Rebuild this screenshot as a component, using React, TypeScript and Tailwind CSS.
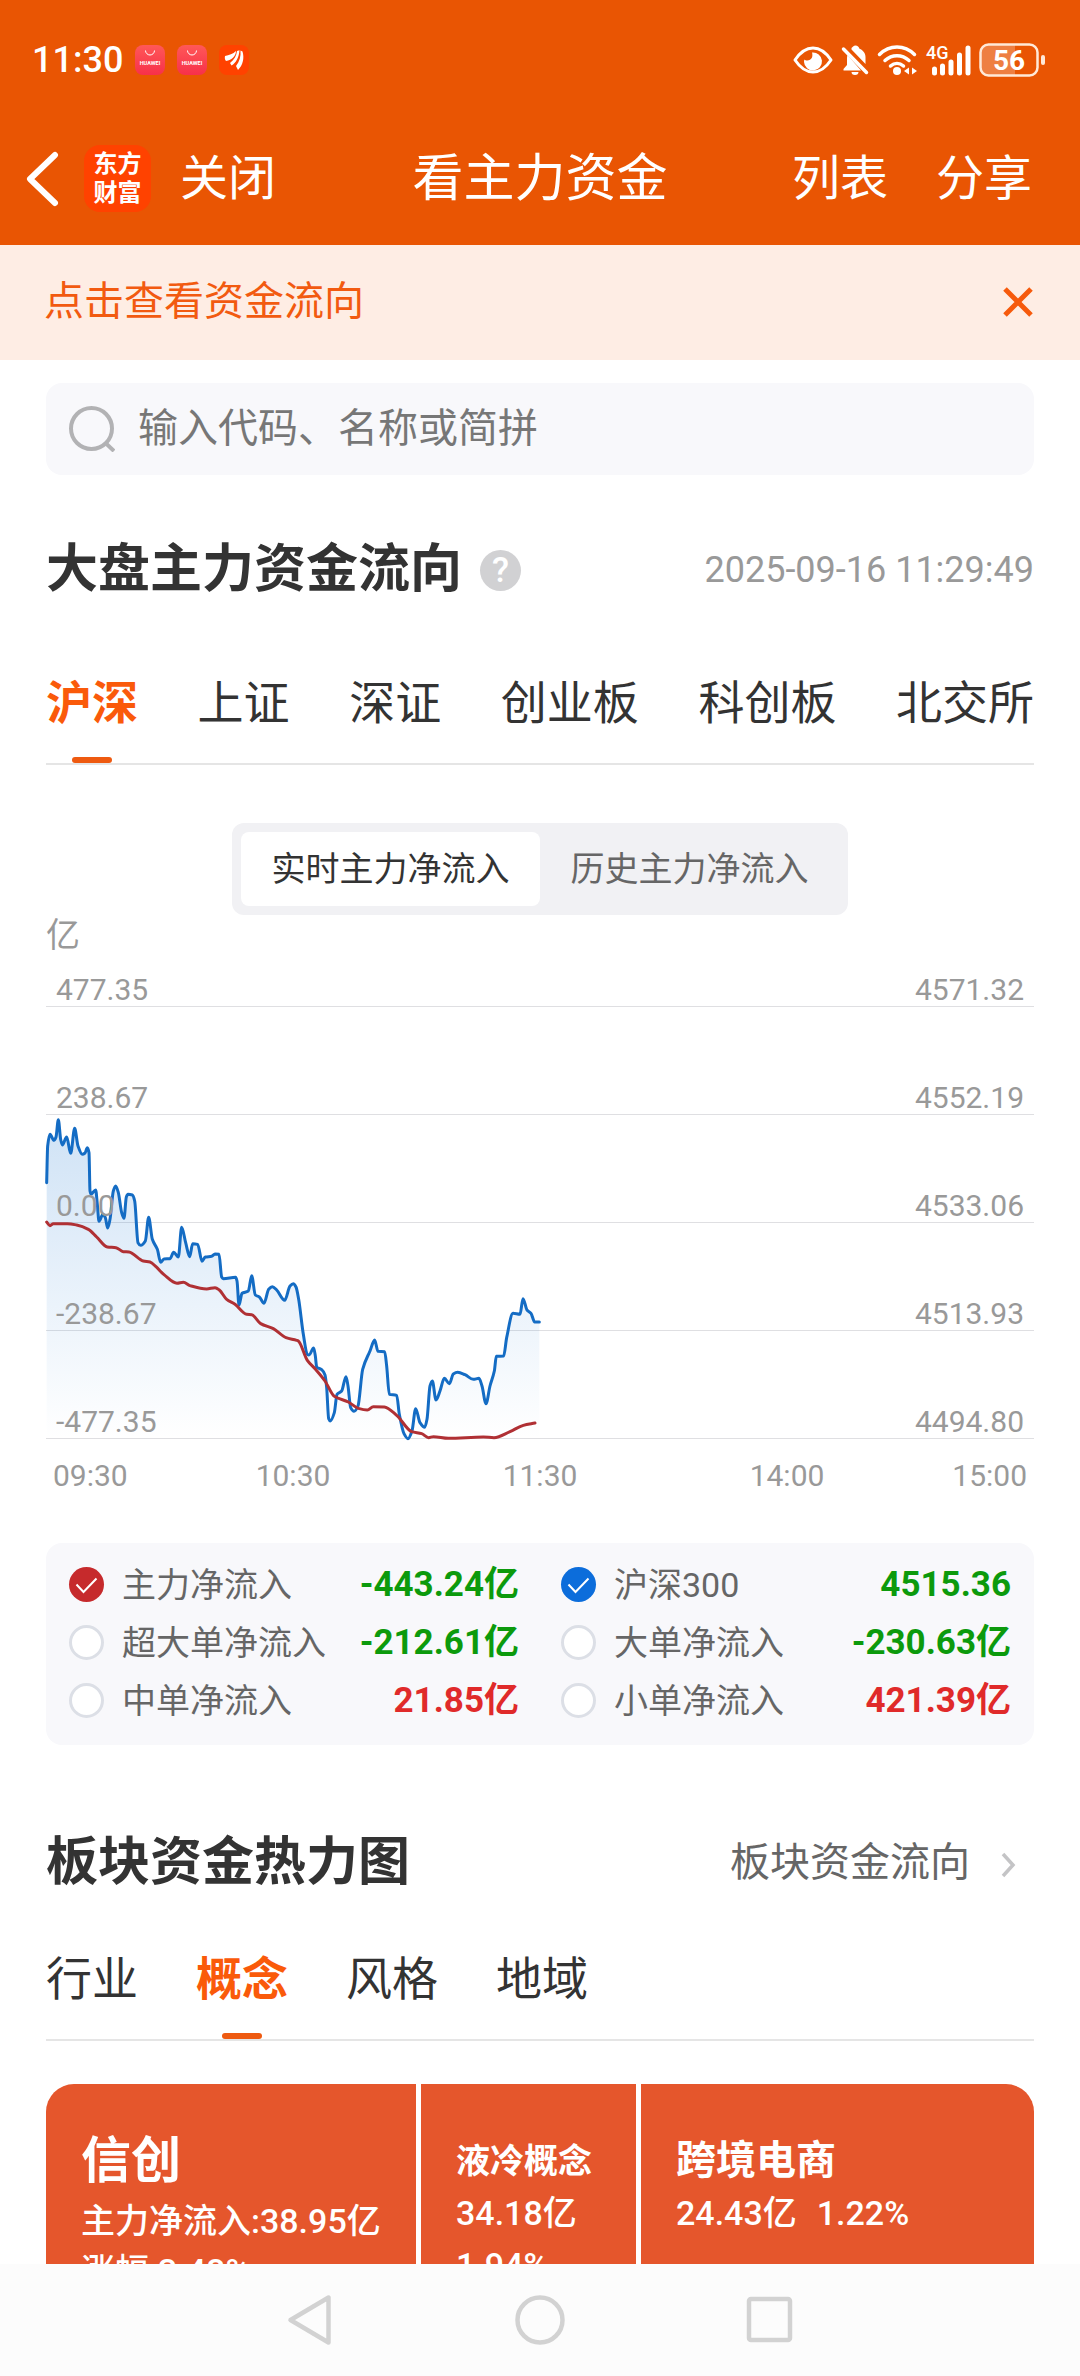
import { useState } from 'react';

type Point = [number, number];

/* Plot space: 2964 wide (full session) by 1296 high (four grid bands). */
const indexLine: Point[] = [
  [2, 527], [5, 417], [12, 382], [24, 400], [30, 390], [37, 338], [44, 397], [49, 414], [62, 390], [74, 439],
  [86, 364], [96, 417], [109, 442], [117, 438], [124, 422], [129, 437], [132, 552], [135, 561], [149, 549],
  [154, 592], [159, 643], [171, 622], [178, 632], [185, 663], [192, 637], [202, 552], [209, 537], [217, 557],
  [227, 617], [234, 634], [241, 570], [246, 562], [259, 564], [266, 582], [276, 707], [284, 715], [298, 702],
  [308, 631], [319, 697], [334, 727], [344, 766], [354, 756], [372, 755], [383, 736], [397, 750], [407, 661],
  [419, 707], [431, 749], [440, 710], [455, 712], [468, 763], [478, 750], [497, 748], [507, 741], [519, 742],
  [527, 810], [532, 815], [569, 811], [573, 822], [579, 894], [588, 859], [607, 852], [617, 806], [628, 864],
  [640, 870], [654, 889], [668, 847], [679, 839], [692, 849], [716, 880], [732, 837], [742, 830], [750, 840],
  [758, 877], [772, 982], [784, 1042], [789, 1044], [803, 1023], [808, 1047], [812, 1080], [827, 1088],
  [837, 1104], [842, 1142], [848, 1235], [853, 1242], [865, 1217], [873, 1162], [887, 1152], [900, 1109],
  [906, 1137], [914, 1202], [924, 1213], [936, 1197], [950, 1087], [972, 1032], [986, 999], [996, 1033],
  [1016, 1034], [1022, 1077], [1030, 1162], [1052, 1165], [1060, 1222], [1074, 1280], [1086, 1295],
  [1098, 1272], [1109, 1205], [1122, 1247], [1136, 1261], [1143, 1237], [1152, 1137], [1159, 1122],
  [1170, 1179], [1182, 1152], [1195, 1114], [1210, 1130], [1222, 1101], [1235, 1096], [1257, 1103],
  [1282, 1117], [1299, 1114], [1308, 1137], [1320, 1190], [1332, 1137], [1345, 1092], [1351, 1048],
  [1373, 1047], [1382, 992], [1401, 919], [1422, 922], [1431, 875], [1443, 909], [1455, 919], [1466, 945],
  [1480, 945],
];

const flowLine: Point[] = [
  [2, 645], [12, 656], [22, 650], [64, 650], [92, 654], [127, 667], [152, 690], [184, 720], [210, 722],
  [232, 734], [249, 735], [292, 762], [312, 765], [330, 779], [354, 803], [393, 829], [412, 826], [432, 836],
  [482, 846], [507, 842], [520, 849], [542, 877], [567, 892], [602, 922], [617, 923], [644, 950], [682, 965],
  [720, 992], [752, 1000], [757, 1002], [784, 1060], [807, 1085], [837, 1122], [865, 1168], [907, 1185],
  [937, 1204], [964, 1209], [982, 1199], [1015, 1200], [1052, 1225], [1097, 1274], [1127, 1280],
  [1148, 1292], [1162, 1289], [1207, 1294], [1312, 1290], [1344, 1292], [1392, 1274], [1432, 1255],
  [1467, 1248],
];

/* Monotone cubic interpolation, so peaks never overshoot their samples. */
function smooth(points: Point[]): string {
  const slopes = points.slice(1).map((p, i) => (p[1] - points[i][1]) / (p[0] - points[i][0]));
  const tangents = points.map((_, i) => {
    if (i === 0) return slopes[0];
    if (i === points.length - 1) return slopes[i - 1];
    const a = slopes[i - 1];
    const b = slopes[i];
    return a * b <= 0 ? 0 : (2 * a * b) / (a + b);
  });
  let d = `M${points[0][0]} ${points[0][1]}`;
  for (let i = 1; i < points.length; i++) {
    const [x0, y0] = points[i - 1];
    const [x1, y1] = points[i];
    const h = (x1 - x0) / 3;
    d += `C${x0 + h} ${y0 + h * tangents[i - 1]} ${x1 - h} ${y1 - h * tangents[i]} ${x1} ${y1}`;
  }
  return d;
}

const indexPath = smooth(indexLine);
const flowPath = smooth(flowLine);

const axisRows = [
  ['477.35', '4571.32'],
  ['238.67', '4552.19'],
  ['0.00', '4533.06'],
  ['-238.67', '4513.93'],
  ['-477.35', '4494.80'],
];

function AppBadge() {
  return (
    <svg viewBox="0 0 30 30" className="size-[30px]" aria-hidden="true">
      <defs>
        <linearGradient id="store" x1="0" y1="0" x2="0" y2="1">
          <stop offset="0" stopColor="#ff5858" />
          <stop offset="1" stopColor="#f7304a" />
        </linearGradient>
      </defs>
      <rect width="30" height="30" rx="8" fill="url(#store)" />
      <path d="M10.500 5.500a4.500 4.500 0 0 0 9 0" fill="none" stroke="#fff" strokeWidth="1" />
      <text x="15" y="19.500" textAnchor="middle" fontSize="5.500" fontWeight="700" fill="#fff" fontFamily="Roboto, sans-serif">HUAWEI</text>
    </svg>
  );
}

function StatusBar() {
  return (
    <div className="flex h-[120px] items-center justify-between pr-[34px] pl-8">
      <div className="flex items-center gap-3">
        <span className="text-[36px] leading-[48px] font-medium">11:30</span>
        <AppBadge />
        <AppBadge />
        <svg viewBox="0 0 30 30" className="size-[30px]" aria-hidden="true">
          <rect width="30" height="30" rx="8" fill="#ff4200" />
          <path d="M6 11c4-1 8-2 11-5 0 5-4 9-10 10-1-1-1.500-3-1-5z" fill="#fff" />
          <path d="M18 6l2.500-.8C20 12 17 18 12.500 20.500L11 18c4-3 6.500-7 7-12z" fill="#fff" />
          <path d="M21.500 5.500l2 1C25.500 13 24 20 19 25l-2-4c3.500-4.500 5-9.500 4.500-15.500z" fill="#fff" />
        </svg>
      </div>
      <div className="flex items-center gap-2">
        <svg viewBox="0 0 40 30" className="h-[30px] w-10" aria-hidden="true">
          <path d="M2 15C8 6 14 3 20 3s12 3 18 12c-6 9-12 12-18 12S8 24 2 15z" fill="none" stroke="#fff" strokeWidth="3" strokeLinejoin="round" />
          <path d="M19 7.500a9 9 0 1 1-8 9.500c0-1 .1-1.800.4-2.500C13 16 17.500 16 19 12.500c.5-1.500.5-3.500 0-5z" fill="#fff" />
        </svg>
        <svg viewBox="0 0 28 32" className="h-8 w-7" aria-hidden="true">
          <path d="M6.500 11c-.3 1-.5 2-.5 3v7l-3.500 4v1.500H20L6.500 11zM10.500 5.500 24.500 20v-7c0-4-2.500-7-6-8.300C18 3 16.500 1.500 14.500 1.500S11.500 3 10.500 4z" fill="#fff" />
          <path d="M10.500 28h7a3.500 3 0 0 1-7 0z" fill="#fff" />
          <path d="M2.500 5 25.500 28.500" stroke="#fff" strokeWidth="3.500" strokeLinecap="round" />
        </svg>
        <svg viewBox="0 0 40 32" className="h-8 w-10" fill="none" stroke="#fff" strokeWidth="3.500" strokeLinecap="round" aria-hidden="true">
          <path d="M2.500 10.500c10-10 25-10 35 0" />
          <path d="M8 16.500c7-6.500 17-6.500 24 0" />
          <path d="M13.500 22c4-3.500 9-3.500 13 0" />
          <circle cx="20" cy="27" r="4" fill="#fff" stroke="none" />
          <path d="M32 23.500v7l-5-3.500zM35 23.500v7l5-3.500z" fill="#fff" stroke="none" />
        </svg>
        <svg viewBox="0 0 46 32" className="h-8 w-[46px] overflow-visible" aria-hidden="true">
          <text x="1" y="15" fontSize="18" fontWeight="500" fill="#fff" fontFamily="Roboto, sans-serif">4G</text>
          <path d="M9.500 25v4M17.500 22v7M26 18v11M34.500 11v18M43 4v25" stroke="#fff" strokeWidth="5" strokeLinecap="round" />
        </svg>
        <svg viewBox="0 0 67 34" className="h-[34px] w-[67px]" aria-hidden="true">
          <path d="M9 2h27v30H9a7 7 0 0 1-7-7V9a7 7 0 0 1 7-7z" fill="#fff" fillOpacity=".25" />
          <rect x="1.500" y="1.500" width="57" height="31" rx="8" fill="none" stroke="#ffe9d8" strokeWidth="2.500" />
          <rect x="62" y="12" width="4" height="10" rx="2" fill="#ffe9d8" />
          <text x="30" y="27" textAnchor="middle" fontSize="28" fontWeight="700" fill="#fff" fontFamily="Roboto, sans-serif">56</text>
        </svg>
      </div>
    </div>
  );
}

function NavBar() {
  return (
    <nav className="grid h-[125px] grid-cols-[1fr_auto_1fr] items-center pb-2 text-[48px] leading-[64px]">
      <div className="flex items-center pl-[26px]">
        <button type="button" aria-label="返回">
          <svg viewBox="0 0 34 56" className="h-14 w-[34px]" aria-hidden="true">
            <path d="M29 4 4 28l25 24" fill="none" stroke="#fff" strokeWidth="6" strokeLinecap="round" strokeLinejoin="round" />
          </svg>
        </button>
        <div className="ml-6 flex size-[67px] flex-col items-center justify-center rounded-2xl bg-[#ff4200] text-[24px] leading-[29px] font-bold">
          <span>东方</span>
          <span>财富</span>
        </div>
        <button type="button" className="ml-[29px]">关闭</button>
      </div>
      <h1 className="text-[51px]">看主力资金</h1>
      <div className="flex items-center justify-end gap-12 pr-12">
        <button type="button">列表</button>
        <button type="button">分享</button>
      </div>
    </nav>
  );
}

function Tabs({ items, initial, spread }: { items: string[]; initial: string; spread?: boolean }) {
  const [active, setActive] = useState(initial);
  return (
    <div role="tablist" className={`flex border-b-2 border-[#e5e5e5] ${spread ? 'justify-between' : 'gap-[58px]'}`}>
      {items.map((item) => {
        const on = item === active;
        return (
          <button
            key={item}
            type="button"
            role="tab"
            aria-selected={on}
            onClick={() => setActive(item)}
            className={`flex flex-col items-center gap-[21px] text-[46px] leading-[66px] ${on ? 'font-bold text-[#fa5a0a]' : 'text-[#333]'}`}
          >
            {item}
            <span className={`h-[6px] w-10 rounded-sm ${on ? 'bg-[#ee5a10]' : 'bg-transparent'}`} />
          </button>
        );
      })}
    </div>
  );
}

function FlowChart() {
  return (
    <figure>
      <div className="pt-[2px] text-[34px] leading-9 text-[#999]">亿</div>
      <div className="relative">
        <svg viewBox="0 0 2964 1296" preserveAspectRatio="none" className="absolute inset-x-0 bottom-0 h-[432px] w-full overflow-visible" aria-hidden="true">
          <defs>
            <linearGradient id="area" gradientUnits="userSpaceOnUse" x1="0" y1="338" x2="0" y2="1296">
              <stop offset="0" stopColor="#1070d0" stopOpacity=".2" />
              <stop offset="1" stopColor="#1070d0" stopOpacity="0" />
            </linearGradient>
          </defs>
          <path d={`${indexPath}L1480 1296L2 1296Z`} fill="url(#area)" />
        </svg>
        {axisRows.map(([left, right], i) => (
          <div
            key={left}
            className={`flex items-end justify-between border-b border-[#dfdfe2] px-[10px] text-[30px] leading-8 text-[#999] ${i === 0 ? 'h-[54px]' : 'h-[108px]'}`}
          >
            <span className="relative z-10">{left}</span>
            <span>{right}</span>
          </div>
        ))}
        <svg viewBox="0 0 2964 1296" preserveAspectRatio="none" className="absolute inset-x-0 bottom-0 h-[432px] w-full overflow-visible" fill="none" strokeWidth="3" strokeLinejoin="round" strokeLinecap="round" aria-hidden="true">
          <path d={indexPath} stroke="#146cc4" vectorEffect="non-scaling-stroke" />
          <path d={flowPath} stroke="#b03034" vectorEffect="non-scaling-stroke" />
        </svg>
      </div>
      <div className="mt-[21px] flex text-center text-[30px] leading-8 text-[#999]">
        <span className="w-1/8 pl-[7px] text-left">09:30</span>
        <span className="w-1/4">10:30</span>
        <span className="w-1/4">11:30</span>
        <span className="w-1/4">14:00</span>
        <span className="w-1/8 pr-[7px] text-right">15:00</span>
      </div>
    </figure>
  );
}

const series = [
  { name: '主力净流入', value: '-443.24亿', tone: 'text-[#0c9a0c]', on: true, fill: 'checked:bg-[#c62a2c]' },
  { name: '沪深300', value: '4515.36', tone: 'text-[#0c9a0c]', on: true, fill: 'checked:bg-[#0c6ddb]' },
  { name: '超大单净流入', value: '-212.61亿', tone: 'text-[#0c9a0c]', on: false, fill: 'checked:bg-[#c62a2c]' },
  { name: '大单净流入', value: '-230.63亿', tone: 'text-[#0c9a0c]', on: false, fill: 'checked:bg-[#c62a2c]' },
  { name: '中单净流入', value: '21.85亿', tone: 'text-[#e02a2a]', on: false, fill: 'checked:bg-[#c62a2c]' },
  { name: '小单净流入', value: '421.39亿', tone: 'text-[#e02a2a]', on: false, fill: 'checked:bg-[#c62a2c]' },
];

function Legend() {
  return (
    <div className="mt-[51px] grid grid-cols-2 gap-x-[42px] rounded-2xl bg-[#f8f8fb] px-[23px] pt-3 pb-4">
      {series.map((s) => (
        <label key={s.name} className="flex h-[58px] items-center text-[34px] leading-[48px] whitespace-nowrap text-[#666]">
          <span className="relative mr-[18px] size-[35px] shrink-0">
            <input
              type="checkbox"
              defaultChecked={s.on}
              className={`peer block size-full appearance-none rounded-full border-3 border-[#dcdfe6] bg-white checked:border-0 ${s.fill}`}
            />
            <svg viewBox="0 0 35 35" className="pointer-events-none absolute inset-0 hidden peer-checked:block" aria-hidden="true">
              <path d="M7.500 17.500 14.500 25 27.500 11.500" fill="none" stroke="#fff" strokeWidth="2" />
            </svg>
          </span>
          <span className="pt-[2px]">{s.name}</span>
          <span className={`ml-auto pt-[2px] text-[35px] font-bold ${s.tone}`}>{s.value}</span>
        </label>
      ))}
    </div>
  );
}

function HeatMap() {
  return (
    <div className="mt-[43px] grid h-[560px] grid-cols-[370fr_215fr_393fr] gap-[5px] overflow-hidden rounded-[28px] text-[34px] leading-[52px] font-medium whitespace-nowrap text-white">
      <div className="bg-[#e5562c] pt-[42px] pl-[35px] leading-[50px]">
        <h3 className="text-[50px] leading-[70px] font-bold">信创</h3>
        <p>主力净流入:38.95亿</p>
        <p>涨幅:3.48%</p>
      </div>
      <div className="bg-[#e5562c] pt-[51px] pl-[35px]">
        <h3 className="font-bold">液冷概念</h3>
        <p>34.18亿</p>
        <p>1.94%</p>
      </div>
      <div className="bg-[#e5562c] pt-[51px] pl-[35px]">
        <h3 className="text-[40px] font-bold">跨境电商</h3>
        <p className="flex gap-5">
          <span>24.43亿</span>
          <span>1.22%</span>
        </p>
      </div>
    </div>
  );
}

function SystemBar() {
  return (
    <div className="flex h-28 shrink-0 items-center justify-center gap-[180px] bg-[#fcfcfc]">
      <button type="button" aria-label="后退">
        <svg viewBox="0 0 50 52" className="h-[52px] w-[50px]" fill="none" stroke="#d2d2d2" strokeWidth="4.500" strokeLinejoin="round" aria-hidden="true">
          <path d="M43.500 3.500v45L5.500 26z" />
        </svg>
      </button>
      <button type="button" aria-label="主页">
        <svg viewBox="0 0 50 50" className="size-[50px]" fill="none" stroke="#d2d2d2" strokeWidth="4.500" aria-hidden="true">
          <circle cx="25" cy="25" r="22.500" />
        </svg>
      </button>
      <button type="button" aria-label="最近任务">
        <svg viewBox="0 0 50 50" className="size-[50px]" fill="none" stroke="#d2d2d2" strokeWidth="4.500" aria-hidden="true">
          <rect x="4" y="4" width="41" height="41" rx="2" />
        </svg>
      </button>
    </div>
  );
}

export default function App() {
  const [mode, setMode] = useState('实时主力净流入');
  return (
    <div className="flex h-screen flex-col bg-white font-['Roboto','Noto_Sans_CJK_SC',sans-serif]">
      <header className="shrink-0 bg-[#e95503] text-white">
        <StatusBar />
        <NavBar />
      </header>
      <main className="min-h-0 flex-1 overflow-hidden">
        <div className="flex h-[115px] items-center justify-between bg-[#feede4] pr-[46px] pb-[2px] pl-11 text-[#f25a10]">
          <a href="#flow" className="text-[40px] leading-[56px]">点击查看资金流向</a>
          <button type="button" aria-label="关闭提示">
            <svg viewBox="0 0 32 32" className="size-8" aria-hidden="true">
              <path d="M3 3l26 26M29 3 3 29" stroke="#f65a0c" strokeWidth="5" />
            </svg>
          </button>
        </div>
        <div className="px-[46px]">
          <label className="mt-[23px] flex h-[92px] items-center rounded-2xl bg-[#f8f8fb] pl-[23px]">
            <svg viewBox="0 0 46 46" className="mr-[23px] size-[46px] shrink-0" fill="none" stroke="#b2b2b4" strokeWidth="4" aria-hidden="true">
              <circle cx="22.500" cy="22.500" r="20.500" />
              <path d="M36.500 37l8.500 8" />
            </svg>
            <input
              type="text"
              aria-label="搜索"
              placeholder="输入代码、名称或简拼"
              className="min-w-0 flex-1 bg-transparent text-[40px] leading-[56px] outline-none placeholder:text-[#777]"
            />
          </label>

          <section id="flow">
            <div className="mt-[49px] mb-[54px] flex h-[92px] items-center">
              <h2 className="text-[52px] leading-[72px] font-bold text-[#333]">大盘主力资金流向</h2>
              <button type="button" aria-label="说明" className="ml-[18px] flex size-[41px] items-center justify-center rounded-full bg-[#d1d1d3] text-[35px] leading-[41px] font-medium text-white">
                ?
              </button>
              <time className="ml-auto text-[36px] leading-[48px] text-[#999]">2025-09-16 11:29:49</time>
            </div>
            <Tabs items={['沪深', '上证', '深证', '创业板', '科创板', '北交所']} initial="沪深" spread />
            <div className="mt-[58px] flex justify-center">
              <div className="flex h-[92px] rounded-xl bg-[#f1f1f4] p-[9px]">
                {['实时主力净流入', '历史主力净流入'].map((m) => (
                  <button
                    key={m}
                    type="button"
                    aria-pressed={m === mode}
                    onClick={() => setMode(m)}
                    className={`w-[299px] rounded-lg text-[34px] leading-[48px] ${m === mode ? 'bg-white text-[#333]' : 'text-[#666]'}`}
                  >
                    {m}
                  </button>
                ))}
              </div>
            </div>
            <FlowChart />
            <Legend />
          </section>

          <section>
            <div className="mt-[72px] mb-[37px] flex h-[92px] items-center justify-between">
              <h2 className="text-[52px] leading-[72px] font-bold text-[#333]">板块资金热力图</h2>
              <a href="#sectors" className="flex items-center gap-[30px] pr-[18px] text-[40px] leading-[56px] text-[#666]">
                板块资金流向
                <svg viewBox="0 0 16 26" className="mt-1 h-[26px] w-4" aria-hidden="true">
                  <path d="M3 2l10 11L3 24" fill="none" stroke="#c4c4c6" strokeWidth="3.500" />
                </svg>
              </a>
            </div>
            <Tabs items={['行业', '概念', '风格', '地域']} initial="概念" />
            <HeatMap />
          </section>
        </div>
      </main>
      <SystemBar />
    </div>
  );
}
